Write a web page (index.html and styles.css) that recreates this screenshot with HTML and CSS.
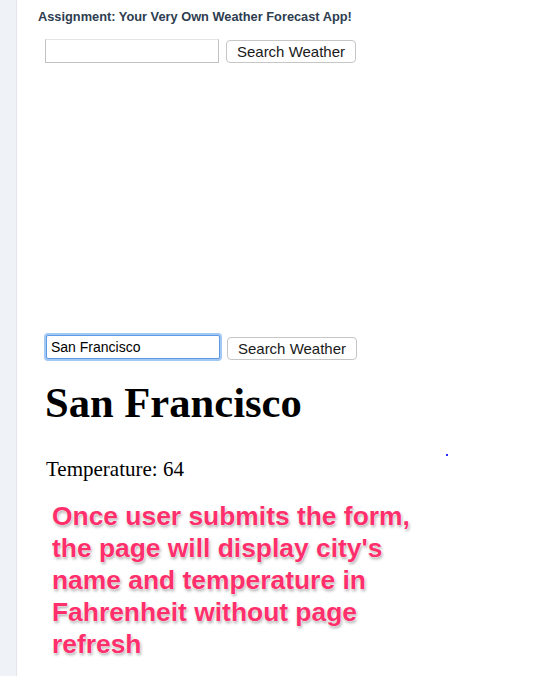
FILE: index.html
```html
<!DOCTYPE html>
<html>
<head>
<meta charset="utf-8">
<link rel="stylesheet" href="styles.css">
</head>
<body>
<div class="page">
  <aside class="rail"></aside>
  <main class="content">
    <h2 class="title">Assignment: Your Very Own Weather Forecast App!</h2>
    <form class="search">
      <input class="field" type="text">
      <button class="btn" type="button">Search Weather</button>
    </form>
    <section class="demo">
      <form class="search">
        <input class="field focused" type="text" value="San Francisco">
        <button class="btn" type="button">Search Weather</button>
      </form>
      <h1 class="city">San Francisco</h1>
      <p class="temp">Temperature: 64</p>
      <p class="note">Once user submits the form, the page will display city's name and temperature in Fahrenheit without page refresh</p>
      <span class="dot"></span>
    </section>
  </main>
</div>
</body>
</html>
```
FILE: styles.css
```css
html, body {
  margin: 0;
  padding: 0;
  background: #ffffff;
  height: 100%;
}
.page {
  display: flex;
  min-height: 676px;
}
.rail {
  width: 16px;
  flex: none;
  background: #eff2f7;
  border-right: 1px solid #e2e6ec;
}
.content {
  flex: 1;
  padding-left: 21px;
}
.title {
  margin: 0;
  padding-top: 10px;
  font-family: "Liberation Sans", Arial, sans-serif;
  font-weight: bold;
  font-size: 12.8px;
  line-height: 14px;
  color: #2e3d50;
}
.search {
  display: flex;
  align-items: flex-start;
  gap: 7px;
  margin: 15px 0 0 7px;
}
.field {
  box-sizing: border-box;
  width: 174px;
  height: 24px;
  margin: 0;
  padding: 0 4px;
  border: 1px solid #c2c2c2;
  border-top-color: #e4e4e4;
  border-radius: 0;
  font-family: "Liberation Sans", Arial, sans-serif;
  font-size: 14px;
  color: #000;
  background: #fff;
  outline: none;
}
.field.focused {
  border: 1px solid #5d9be6;
  border-radius: 2px;
  box-shadow: 0 0 0 2px #a3c8f3;
  width: 174px;
  margin-left: 1px;
}
.btn {
  box-sizing: border-box;
  width: 130px;
  height: 23px;
  margin: 1px 0 0 0;
  padding: 0;
  background: #ffffff;
  border: 1px solid #c6c6c6;
  border-radius: 4px;
  font-family: "Liberation Sans", Arial, sans-serif;
  font-size: 15px;
  color: #1a1a1a;
}
.demo {
  position: relative;
  margin-top: 272px;
  padding-left: 8px;
}
.demo .search {
  margin-left: -1px;
  margin-top: 0;
}
.demo .btn {
  margin-top: 2px;
}
.city {
  margin: 19px 0 0 -1px;
  font-family: "Liberation Serif", "Times New Roman", serif;
  font-weight: bold;
  font-size: 42.6px;
  line-height: 48px;
  color: #000;
}
.temp {
  margin: 30px 0 0 0;
  font-family: "Liberation Serif", "Times New Roman", serif;
  font-size: 21px;
  line-height: 24px;
  color: #000;
}
.note {
  margin: 19px 0 0 6px;
  width: 390px;
  font-family: "Liberation Sans", Arial, sans-serif;
  font-weight: bold;
  font-size: 26.4px;
  line-height: 32px;
  color: #ff2f6c;
  text-shadow: 0 0 1px #fff, 0 0 2px #fff, 1px 2px 3px rgba(0, 0, 0, 0.35);
}
.dot {
  position: absolute;
  left: 408px;
  top: 119px;
  width: 2px;
  height: 2px;
  background: #2b2bff;
}
```
